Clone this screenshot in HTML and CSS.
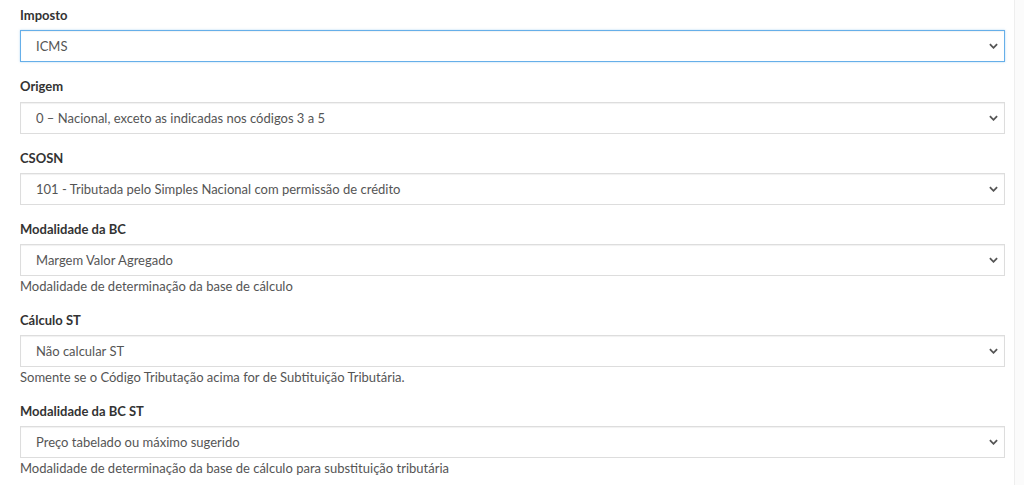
FILE: index.html
```html
<!DOCTYPE html>
<html lang="pt-BR">
<head>
  <meta charset="UTF-8" />
  <title>Imposto</title>
  <link rel="stylesheet" href="styles.css">
</head>
<body>
  <div class="panel">
    <form class="tax-form">
      <div class="form-group">
        <label>Imposto</label>
        <div class="select-wrap">
          <select class="form-control focused">
            <option>ICMS</option>
          </select>
          <svg class="chevron" viewBox="0 0 10 6"><path d="M1 1l4 4 4-4" /></svg>
        </div>
      </div>

      <div class="form-group">
        <label>Origem</label>
        <div class="select-wrap">
          <select class="form-control">
            <option>0 – Nacional, exceto as indicadas nos códigos 3 a 5</option>
          </select>
          <svg class="chevron" viewBox="0 0 10 6"><path d="M1 1l4 4 4-4" /></svg>
        </div>
      </div>

      <div class="form-group">
        <label>CSOSN</label>
        <div class="select-wrap">
          <select class="form-control">
            <option>101 - Tributada pelo Simples Nacional com permissão de crédito</option>
          </select>
          <svg class="chevron" viewBox="0 0 10 6"><path d="M1 1l4 4 4-4" /></svg>
        </div>
      </div>

      <div class="form-group">
        <label>Modalidade da BC</label>
        <div class="select-wrap">
          <select class="form-control">
            <option>Margem Valor Agregado</option>
          </select>
          <svg class="chevron" viewBox="0 0 10 6"><path d="M1 1l4 4 4-4" /></svg>
        </div>
        <span class="help-block">Modalidade de determinação da base de cálculo</span>
      </div>

      <div class="form-group">
        <label>Cálculo ST</label>
        <div class="select-wrap">
          <select class="form-control">
            <option>Não calcular ST</option>
          </select>
          <svg class="chevron" viewBox="0 0 10 6"><path d="M1 1l4 4 4-4" /></svg>
        </div>
        <span class="help-block">Somente se o Código Tributação acima for de Subtituição Tributária.</span>
      </div>

      <div class="form-group">
        <label>Modalidade da BC ST</label>
        <div class="select-wrap">
          <select class="form-control">
            <option>Preço tabelado ou máximo sugerido</option>
          </select>
          <svg class="chevron" viewBox="0 0 10 6"><path d="M1 1l4 4 4-4" /></svg>
        </div>
        <span class="help-block">Modalidade de determinação da base de cálculo para substituição tributária</span>
      </div>
    </form>
  </div>
</body>
</html>
```

FILE: styles.css
```css
body { margin: 0; background: #fbfbfb; font-family: Lato, "Liberation Sans", sans-serif; font-size: 13px; color: #333; }
.panel {
  width: 1015px;
  background: #fff;
  border-right: 1px solid #eee;
  box-sizing: border-box;
  padding: 6px 9px 20px 20px;
}
.form-group { margin-bottom: 15px; }
.form-group label {
  display: block;
  font-weight: bold;
  line-height: 19.33px;
  margin-bottom: 5px;
  color: #333;
}
.select-wrap { position: relative; }
.form-control {
  display: block;
  width: 100%;
  height: 32px;
  padding: 0 30px 0 15px;
  font-family: inherit;
  font-size: 13px;
  color: #555;
  background: #fff;
  border: 1px solid #ddd;
  border-radius: 0;
  box-shadow: inset 0 1px 1px rgba(0,0,0,0.06);
  appearance: none;
  -webkit-appearance: none;
  box-sizing: border-box;
  outline: none;
}
.form-control.focused {
  border-color: #66afe9;
  box-shadow: inset 0 1px 1px rgba(0,0,0,0.05), 0 0 2px rgba(102,175,233,0.5);
}
.chevron {
  position: absolute;
  right: 7px;
  top: 13px;
  width: 9px;
  height: 6px;
  fill: none;
  stroke: #555;
  stroke-width: 2;
}
.help-block {
  display: block;
  margin-top: 2px;
  line-height: 17.67px;
  color: #555;
}
```
